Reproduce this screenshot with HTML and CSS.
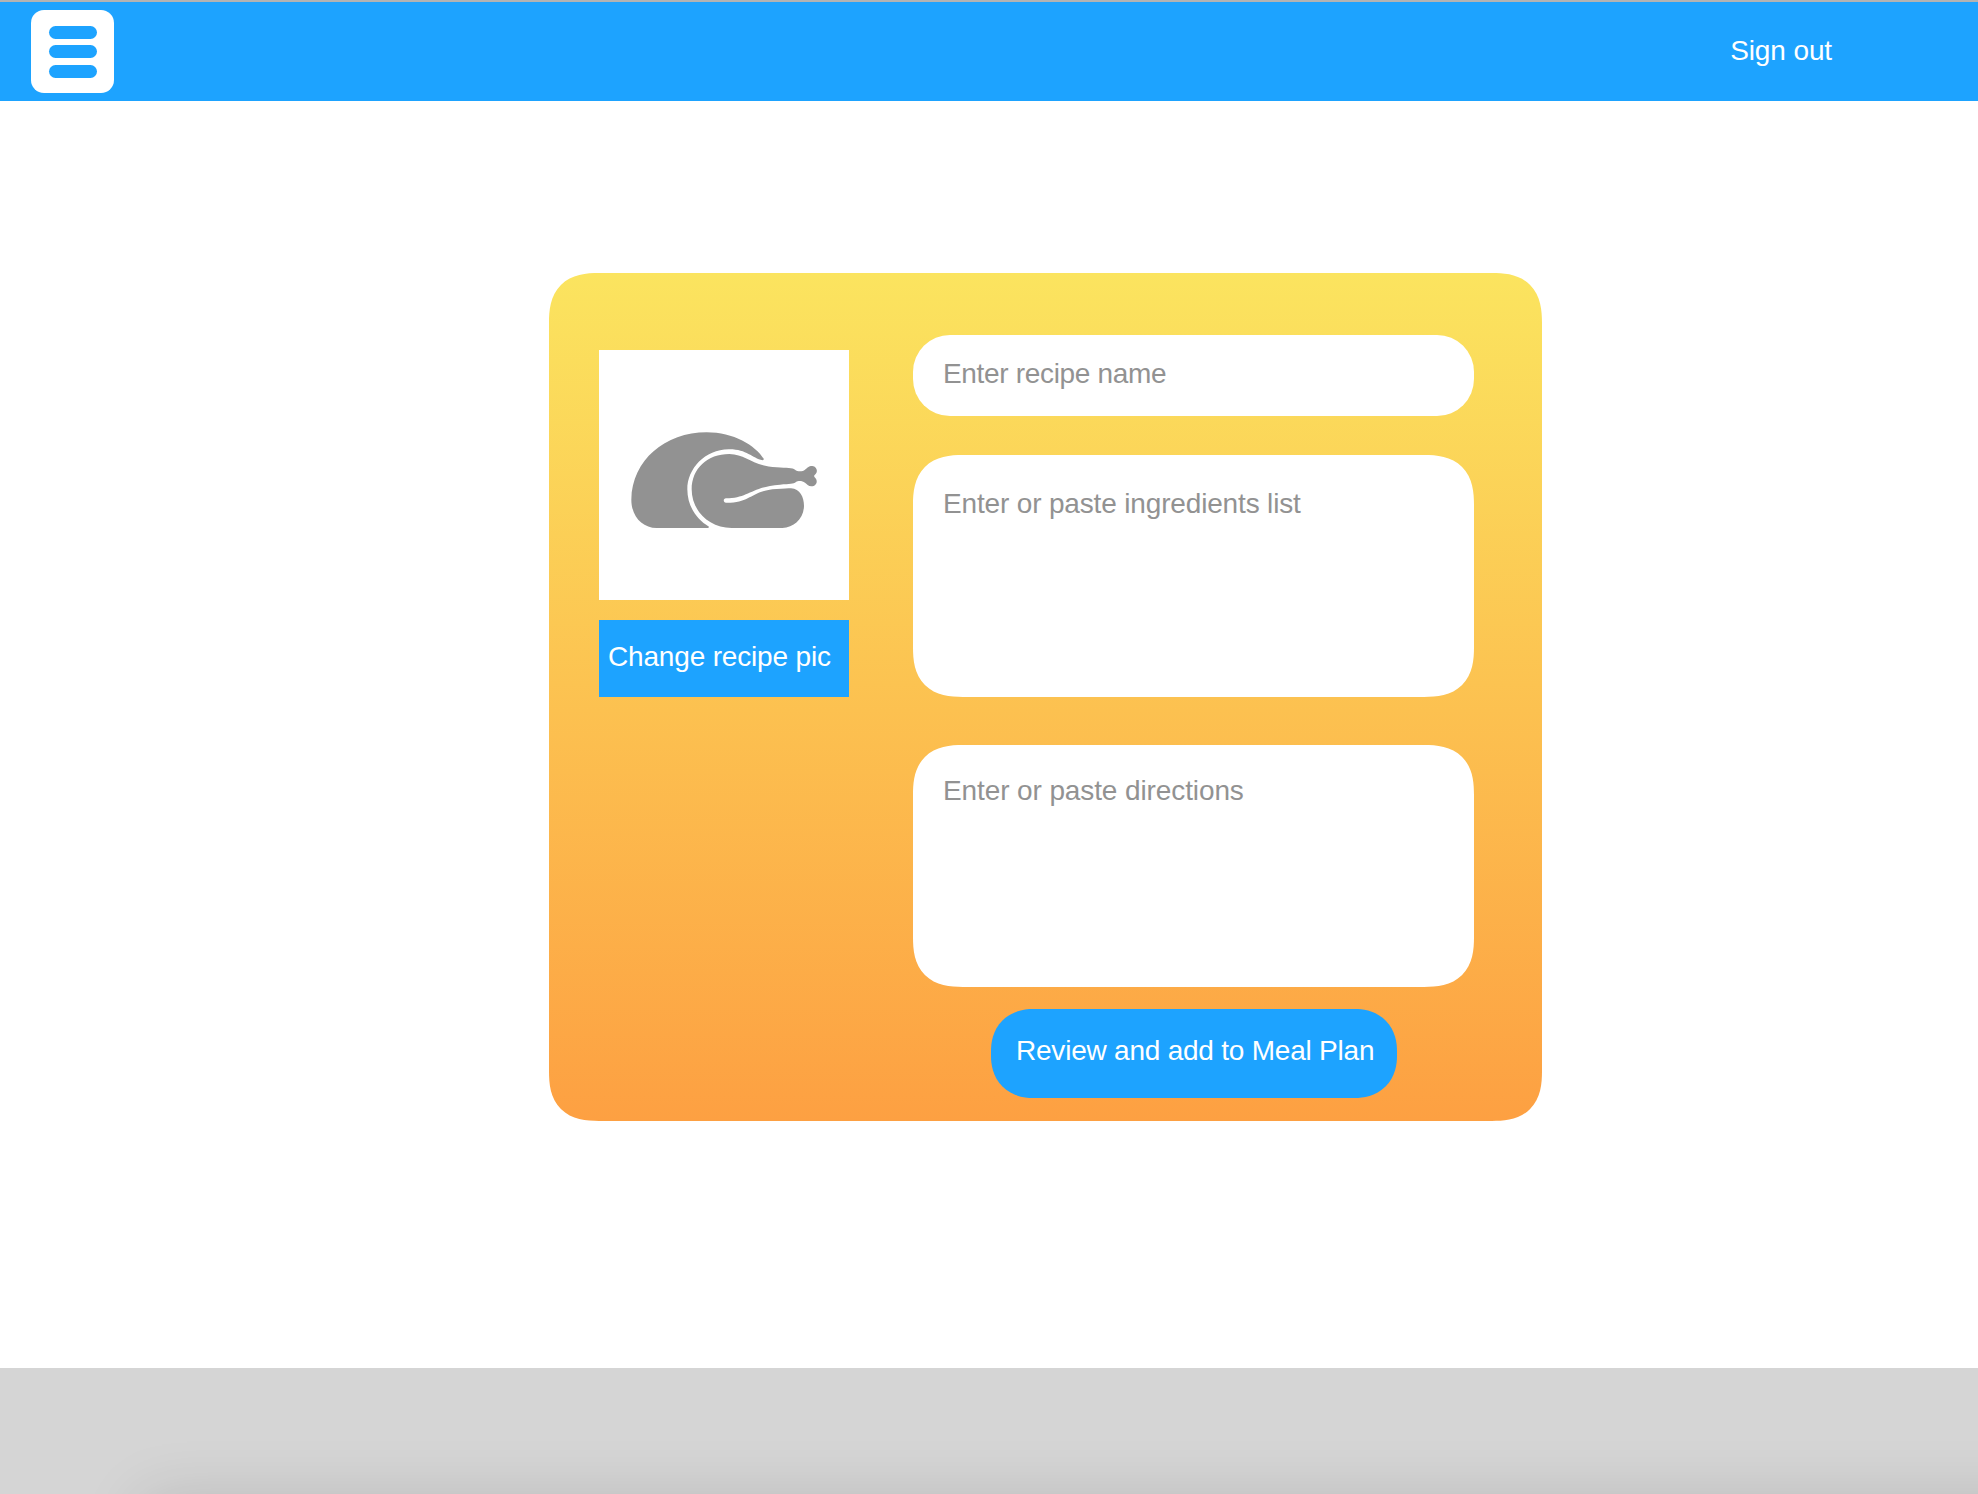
FILE: index.html
```html
<!DOCTYPE html>
<html lang="en">
<head>
<meta charset="utf-8">
<title>Add recipe</title>
<link rel="stylesheet" href="styles.css">
</head>
<body>
<header class="topbar">
  <button class="menu" type="button" aria-label="Menu">
    <svg viewBox="0 0 83 83" width="83" height="83" fill="#1da3ff">
      <rect x="18" y="16" width="48" height="13" rx="6.5"/>
      <rect x="18" y="35" width="48" height="13" rx="6.5"/>
      <rect x="18" y="55" width="48" height="13" rx="6.5"/>
    </svg>
  </button>
  <a class="signout">Sign out</a>
</header>
<main class="page">
  <section class="card">
    <div class="photo-column">
      <div class="photo">
        <svg viewBox="27 29 750 750" width="250" height="250" fill="#929292">
          <path d="M200 563C157 563 124 528 124 478C126 360 225 276 350 276C430 276 497 315 522 357L518 360C485 353 470 326 416 327C345 328 292 385 292 447C292 495 317 535 357 559L355 563Z"/>
          <path d="M305 447C305 385 352 341 418 341C470 342 485 377 560 381C590 383 608 383 615 388C622 394 637 395 645 388C652 383 655 377 667 377C682 378 685 397 674 404L672 407L674 411C685 420 681 438 664 438C655 437 650 431 645 427C637 421 624 421 618 425C610 432 600 430 570 433C485 439 475 474 408 474C399 474 399 487 408 487C485 488 482 450 560 446C580 445 595 444 603 444C630 446 642 470 642 497C641 535 612 562 577 563H425C355 562 305 510 305 447Z"/>
        </svg>
      </div>
      <button class="change" type="button"><span>Change recipe pic</span></button>
    </div>
    <form class="fields">
      <div class="field name" role="textbox">Enter recipe name</div>
      <div class="field ingredients" role="textbox">Enter or paste ingredients list</div>
      <div class="field directions" role="textbox">Enter or paste directions</div>
      <button class="review" type="button"><span>Review and add to Meal Plan</span></button>
    </form>
  </section>
</main>
<footer class="footer"></footer>
</body>
</html>
```
FILE: styles.css
```css
* { box-sizing: border-box; }
body {
  margin: 0;
  height: 1494px;
  display: flex;
  flex-direction: column;
  overflow: hidden;
  background: #fff;
  font: 28px/32px "Liberation Sans", Arial, sans-serif;
}
button {
  border: 0;
  padding: 0;
  font: inherit;
  color: #fff;
  background: #1da3ff;
}
.topbar {
  height: 101px;
  display: flex;
  justify-content: space-between;
  padding: 8px 146px 0 31px;
  border-top: 2px solid #b3b3b3;
  background: #1da3ff;
}
.menu {
  width: 83px;
  height: 83px;
  border-radius: 13px;
  background: #fff;
}
.menu svg, .photo svg { display: block; }
.signout {
  padding-top: 25px;
  color: #fff;
  letter-spacing: -.12px;
}
.page {
  height: 1267px;
  padding: 172px 0 0 549px;
}
.card {
  width: 993px;
  height: 848px;
  display: flex;
  gap: 64px;
  padding: 62px 68px 0 50px;
  border-radius: 40px;
  background: linear-gradient(#fbe45f, #fda042);
}
.photo-column {
  width: 250px;
  display: flex;
  flex-direction: column;
  gap: 20px;
  padding-top: 15px;
}
.photo {
  width: 250px;
  height: 250px;
  background: #fff;
}
.change {
  height: 77px;
  padding: 0 0 4px 9px;
  text-align: left;
  white-space: nowrap;
  letter-spacing: -.17px;
}
.fields {
  width: 561px;
  display: flex;
  flex-direction: column;
}
.field {
  padding-left: 30px;
  border-radius: 37px;
  background: #fff;
  color: #929292;
}
.name {
  height: 81px;
  padding-top: 23px;
  letter-spacing: -.32px;
}
.ingredients {
  height: 242px;
  margin-top: 39px;
  padding-top: 33px;
  letter-spacing: -.16px;
}
.directions {
  height: 242px;
  margin-top: 48px;
  padding-top: 30px;
  letter-spacing: -.11px;
}
.review {
  width: 406px;
  height: 89px;
  margin: 22px 0 0 78px;
  padding: 0 0 5px 25px;
  border-radius: 38px;
  text-align: left;
  white-space: nowrap;
  letter-spacing: -.22px;
}
.footer {
  position: relative;
  height: 126px;
  overflow: hidden;
  background: #d5d5d5;
}
.footer::after {
  content: "";
  position: absolute;
  top: 132px;
  left: 143px;
  right: -200px;
  height: 200px;
  box-shadow: 0 0 60px rgba(0, 0, 0, .14);
}
/* Continuous-curvature corners */
@supports (corner-shape: superellipse(1.5)) {
  .card, .ingredients, .directions { border-radius: 50px; corner-shape: superellipse(1.35); }
  .review { border-radius: 42px; corner-shape: superellipse(1.12); }
}
```
